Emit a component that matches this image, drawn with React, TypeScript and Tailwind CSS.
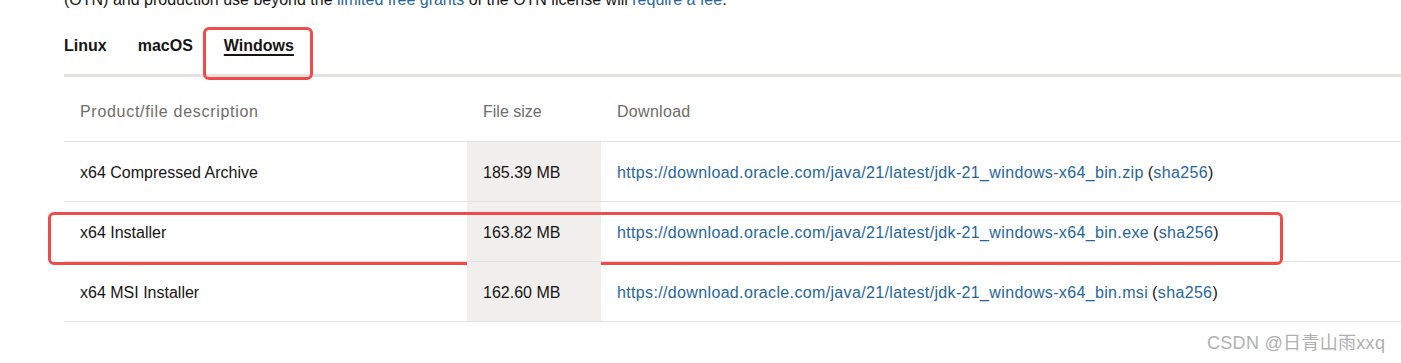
import React from 'react';

const rows = [
  { name: 'x64 Compressed Archive', size: '185.39 MB', ext: 'zip' },
  { name: 'x64 Installer', size: '163.82 MB', ext: 'exe', marked: true },
  { name: 'x64 MSI Installer', size: '162.60 MB', ext: 'msi' },
];

const link = 'text-[#27669a]';

export default function App() {
  return (
    <div className="relative w-[1401px] h-[363px] overflow-hidden bg-white text-[16px] leading-6 text-[#161513] [font-family:'Liberation_Sans',Arial,sans-serif]">
      {/* cut-off intro paragraph */}
      <p className="-mt-[12px] pl-16 whitespace-nowrap">
        (OTN) and production use beyond the <span className={link}>limited free grants</span> of the OTN license will{' '}
        <span className={link}>require a fee</span>.
      </p>

      {/* OS tabs */}
      <div className="ml-16 mt-[22px] flex gap-[31px] border-b-[3px] border-[#e4e2df] pb-4 font-bold">
        <span>Linux</span>
        <span>macOS</span>
        <span className="relative underline underline-offset-[3px] decoration-2">
          Windows
          <span className="absolute -left-[21px] -right-[19px] -top-[7px] -bottom-[22px] rounded-md border-[3px] border-[#f04b4b]" />
        </span>
      </div>

      {/* downloads table */}
      <div className="ml-16">
        <div className="grid grid-cols-[403px_134px_1fr] border-b border-[#e4e2df] pt-[23px] pb-[17px] text-[#6f6c69]">
          <div className="px-4 tracking-[0.7px]">Product/file description</div>
          <div className="px-4">File size</div>
          <div className="px-4 tracking-[0.3px]">Download</div>
        </div>
        {rows.map((r) => (
          <div key={r.ext} className="relative grid h-[60px] grid-cols-[403px_134px_1fr] border-b border-[#e4e2df]">
            <div className="flex items-center px-4 pt-[2px]">{r.name}</div>
            <div className="flex items-center bg-[#f1efed] px-4 pt-[2px]">{r.size}</div>
            <div className="flex items-center px-4 pt-[2px] whitespace-nowrap tracking-[0.35px]">
              <span className={link}>https://download.oracle.com/java/21/latest/jdk-21_windows-x64_bin.{r.ext}</span>
              <span className="ml-1">(</span>
              <span className={link}>sha256</span>
              <span>)</span>
            </div>
            {r.marked && (
              <span className="absolute -left-4 top-[10px] h-[53px] w-[1235px] rounded-md border-[3px] border-[#f04b4b]" />
            )}
          </div>
        ))}
      </div>

      {/* watermark */}
      <span className="absolute left-[1207px] top-[332px] text-[18px] leading-[22px] tracking-[0.3px] text-[#b0b0b0] [font-family:'Liberation_Sans','Noto_Sans_CJK_SC',sans-serif]">
        CSDN @日青山雨xxq
      </span>
    </div>
  );
}
